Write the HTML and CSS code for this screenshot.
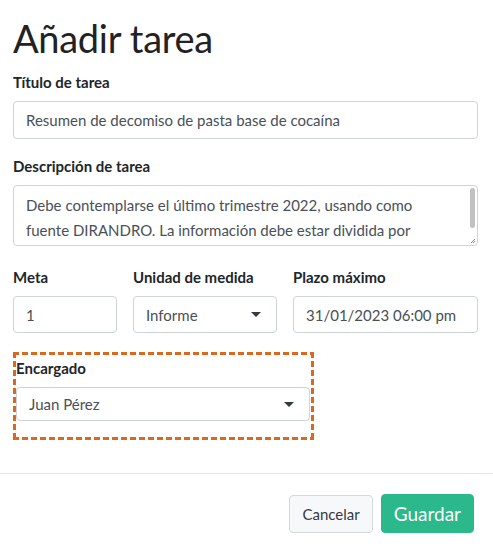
FILE: index.html
```html
<!DOCTYPE html>
<html lang="es">
<head>
<meta charset="utf-8">
<link rel="stylesheet" href="styles.css">
</head>
<body>
<div class="page">
  <div class="content">
    <h1 class="title">Añadir tarea</h1>
    <div class="field">
      <label class="label">Título de tarea</label>
      <div class="input">Resumen de decomiso de pasta base de cocaína</div>
    </div>
    <div class="field">
      <label class="label">Descripción de tarea</label>
      <div class="textarea">
        <div class="ta-text">Debe contemplarse el último trimestre 2022, usando como fuente DIRANDRO. La información debe estar dividida por</div>
        <div class="scroll"><div class="thumb"></div></div>
        <svg class="grip" width="6" height="6" viewBox="0 0 6 6"><path d="M5 1 L1 5 M5 3 L3 5" stroke="#888" stroke-width="1"/></svg>
      </div>
    </div>
    <div class="row">
      <div class="field col-meta">
        <label class="label">Meta</label>
        <div class="input">1</div>
      </div>
      <div class="field col-unit">
        <label class="label">Unidad de medida</label>
        <div class="input select"><span>Informe</span><span class="caret"></span></div>
      </div>
      <div class="field col-date">
        <label class="label">Plazo máximo</label>
        <div class="input">31/01/2023 06:00 pm</div>
      </div>
    </div>
    <div class="highlight">
      <label class="label">Encargado</label>
      <div class="input select"><span>Juan Pérez</span><span class="caret"></span></div>
    </div>
  </div>
  <div class="footer">
    <button class="btn btn-cancel">Cancelar</button>
    <button class="btn btn-save">Guardar</button>
  </div>
</div>
</body>
</html>
```
FILE: styles.css
```css
* { box-sizing: border-box; }
html, body { margin: 0; padding: 0; background: #fff; }
body {
  font-family: "Lato", "Liberation Sans", sans-serif;
  color: #212529;
  font-size: 15px;
}
.page { width: 493px; }
.content { padding: 14px 15px 0 13px; }
.title {
  margin: 0 0 11px 0;
  font-size: 38px;
  font-weight: 400;
  line-height: 48px;
  color: #222;
  letter-spacing: -0.3px;
}
.field { display: flex; flex-direction: column; }
.label {
  display: block;
  font-weight: 700;
  font-size: 15px;
  line-height: 18px;
  margin-bottom: 10px;
  color: #212529;
}
.input {
  height: 38px;
  border: 1px solid #cfd4d9;
  border-radius: 4px;
  padding: 0 12px;
  display: flex;
  align-items: center;
  font-size: 15px;
  color: #495057;
}
.field + .field { margin-top: 18px; }
.textarea {
  position: relative;
  height: 61px;
  border: 1px solid #cfd4d9;
  border-radius: 4px;
  padding: 7px 30px 0 12px;
  font-size: 15px;
  line-height: 25px;
  color: #495057;
  overflow: hidden;
}
.scroll {
  position: absolute;
  right: 2px; top: 2px; bottom: 8px;
  width: 5px;
}
.thumb {
  height: 40px;
  background: #c1c1c1;
  border-radius: 3px;
}
.grip { position: absolute; right: 1px; bottom: 1px; }
.row {
  display: flex;
  gap: 16px;
  margin-top: 22px;
}
.row .field + .field { margin-top: 0; }
.col-meta { width: 104px; }
.col-unit { width: 144px; }
.col-date { flex: 1; }
.row .input { height: 37px; }
.select { justify-content: space-between; }
.caret {
  width: 0; height: 0;
  border-left: 5px solid transparent;
  border-right: 5px solid transparent;
  border-top: 5px solid #343a40;
  margin-right: 3px;
}
.highlight {
  margin-top: 19px;
  width: 301px;
  padding: 7px 4px 19px 3px;
  background:
    linear-gradient(90deg, #d8691f 6px, transparent 6px) top left / 9px 3px repeat-x,
    linear-gradient(90deg, #d8691f 6px, transparent 6px) bottom left / 9px 3px repeat-x,
    linear-gradient(180deg, #d8691f 6px, transparent 6px) top left / 3px 9px repeat-y,
    linear-gradient(180deg, #d8691f 6px, transparent 6px) top right / 3px 9px repeat-y;
}
.highlight .label { margin-bottom: 10px; }
.highlight .input { height: 34px; }
.footer {
  margin-top: 33px;
  border-top: 1px solid #e6e6e6;
  display: flex;
  justify-content: flex-end;
  gap: 8px;
  padding: 21px 19px 0 0;
}
.btn {
  font-family: inherit;
  border-radius: 4px;
  cursor: pointer;
}
.btn-cancel {
  height: 38px;
  padding: 0 12px;
  background: #f7f8fa;
  border: 1px solid #d6d8db;
  color: #343a40;
  font-size: 15px;
}
.btn-save {
  height: 39px;
  margin-top: -1px;
  padding: 0 12px;
  background: #2bb88a;
  border: 1px solid #2bb88a;
  color: #fff;
  font-size: 19px;
}
```
